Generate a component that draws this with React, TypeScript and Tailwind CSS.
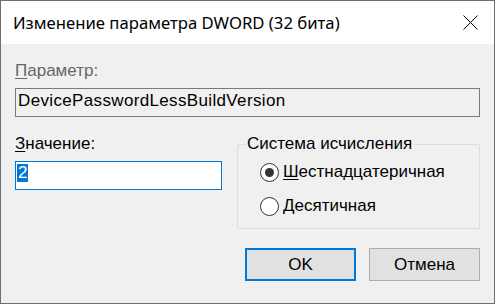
import React from 'react'

function Radio({ checked, label, hot }: { checked: boolean; label: string; hot: string }) {
  return (
    <div className="flex items-center h-[20px]">
      <span className="w-[19px] h-[19px] rounded-full border-[1.5px] border-[#333333] bg-white flex items-center justify-center shrink-0">
        {checked && <span className="w-[9px] h-[9px] rounded-full bg-[#333333]" />}
      </span>
      <span className="ml-[4px]">
        <span className="underline underline-offset-2">{hot}</span>
        {label}
      </span>
    </div>
  )
}

export default function App() {
  return (
    <div
      className="w-[495px] h-[304px] border border-[#6f6f6f] bg-[#f0f0f0] text-black flex flex-col"
      style={{ fontFamily: '"Liberation Sans", Arial, sans-serif' }}
    >
      {/* Title bar */}
      <div className="h-[43px] bg-white flex items-start justify-between shrink-0">
        <div
          className="ml-[12px] mt-[12px] text-[16.7px] leading-[20px]"
          style={{ fontFamily: '"Noto Sans", "Open Sans", sans-serif' }}
        >
          Изменение параметра DWORD (32 бита)
        </div>
        <svg width="15" height="15" viewBox="0 0 15 15" className="mt-[14px] mr-[16px]">
          <path d="M0.5 0.5 L14.5 14.5 M14.5 0.5 L0.5 14.5" stroke="#000" strokeWidth="1" fill="none" />
        </svg>
      </div>

      {/* Body */}
      <div className="flex flex-col px-[14px] pt-[17px] text-[17px] leading-[20px]">
        <div className="text-[#666666]">
          <span className="underline underline-offset-2">П</span>араметр:
        </div>
        <div className="mt-[7px] h-[29px] border border-[#7a7a7a] bg-[#f0f0f0] pl-[2px] pt-[2px] tracking-[0.35px]">
          DevicePasswordLessBuildVersion
        </div>

        <div className="flex mt-[17px]">
          {/* Value */}
          <div className="w-[207px] flex flex-col">
            <div>
              <span className="underline underline-offset-2">З</span>начение:
            </div>
            <div className="mt-[7px] h-[29px] border border-[#0078d7] bg-white pl-[1px] pt-[2px] leading-[18px]">
              <span className="bg-[#0078d7] text-white inline-block h-[18px] px-[1px]">2</span>
            </div>
          </div>

          {/* Base */}
          <fieldset className="ml-[15px] w-[243px] border border-[#dcdcdc] rounded-[2px] pb-[12px]">
            <legend className="ml-[7px] px-[2px] leading-[20px]">Система исчисления</legend>
            <div className="ml-[22px] mt-[8px] flex flex-col gap-[14px]">
              <Radio checked hot="Ш" label="естнадцатеричная" />
              <Radio checked={false} hot="Д" label="есятичная" />
            </div>
          </fieldset>
        </div>

        {/* Buttons */}
        <div className="flex justify-end gap-[13px] mt-[19px]">
          <button className="w-[111px] h-[33px] border-2 border-[#0078d7] bg-[#e1e1e1] leading-[20px]">
            OK
          </button>
          <button className="w-[111px] h-[33px] border border-[#adadad] bg-[#e1e1e1] leading-[20px]">
            Отмена
          </button>
        </div>
      </div>
    </div>
  )
}
